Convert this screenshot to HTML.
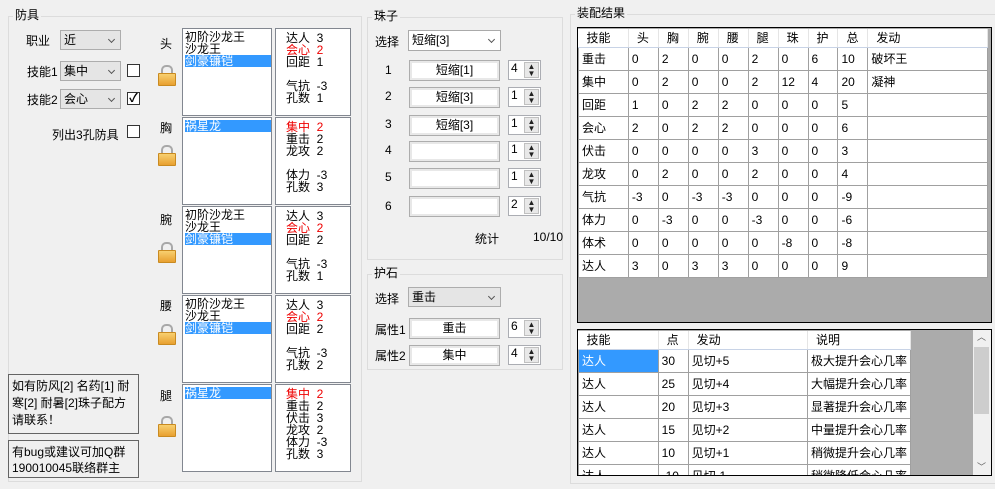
<!DOCTYPE html>
<html><head><meta charset="utf-8"><style>
*{box-sizing:border-box;margin:0;padding:0}
body{width:995px;height:489px;background:#f0f0f0;font-family:"Liberation Sans","Noto Sans CJK SC","WenQuanYi Zen Hei",sans-serif;font-size:12px;color:#000;position:relative;overflow:hidden}
.a{position:absolute}
.grp{position:absolute;border:1px solid #dcdcdc}
.gt{position:absolute;background:#f0f0f0;padding:0 2px;font-size:12px;line-height:14px}
.cb{position:absolute;border:1px solid #adadad;background:#e5e5e5;height:20px;line-height:18px;padding-left:3px}
.cb.w{background:#fff;border-color:#7a7a7a}
.cb:after{content:"";position:absolute;right:6px;top:6px;width:4px;height:4px;border-right:1.5px solid #555;border-bottom:1.5px solid #555;transform:rotate(45deg)}
.chk{position:absolute;width:13px;height:13px;border:1px solid #333;background:#fff}
.lk{position:absolute;width:16px;height:19px}
.lk:before{content:"";position:absolute;left:3px;top:0;width:8px;height:8px;border:2px solid #a8a8a8;border-bottom:none;border-radius:5px 5px 0 0}
.lk:after{content:"";position:absolute;left:0;top:8px;width:16px;height:11px;background:linear-gradient(#f8d070,#e8a030);border:1px solid #c98a20;border-radius:1px}
.lb{position:absolute;background:#fff;border:1px solid #828790;line-height:12px;padding:2px 0 0 2px;overflow:hidden}
.sel{background:#3399ff;color:#fff}
.st{position:absolute;background:#fff;border:1px solid #828790;line-height:12px;padding:3px 0 0 10px;white-space:pre}
.r{color:#e00}
.bt{position:absolute;width:91px;height:21px;border:1px solid #adadad;background:#fff;text-align:center;line-height:18px;box-shadow:inset 0 0 0 2px #e8e8e8}
.sp{position:absolute;width:33px;height:20px;border:1px solid #abadb3;background:#fff;line-height:14px;padding-left:2px}
.sp i{position:absolute;right:1px;top:1px;width:15px;height:16px;background:#e8e8e8;border:1px solid #c0c0c0;font-style:normal;font-size:8px;line-height:7px;text-align:center;color:#222}
.note{position:absolute;border:1px solid #646464;padding:3px 3px;line-height:17px}
table{border-collapse:collapse;position:absolute;background:#fff}
td{border:1px solid #a0a0a0;height:23px;padding:0 0 0 3px;font-size:12px;white-space:nowrap;overflow:hidden}
tr.h td{height:18px;background:#fff;border:none;border-right:1px solid #e5e5e5;border-bottom:1px solid #c8d3e6;padding-left:8px}
</style></head><body>

<div class="grp" style="left:8px;top:16px;width:354px;height:466px"></div>
<div class="gt" style="left:13px;top:8px">防具</div>
<div class="a" style="left:26px;top:32px">职业</div>
<div class="cb" style="left:60px;top:30px;width:61px">近</div>
<div class="a" style="left:27px;top:63px">技能1</div>
<div class="cb" style="left:60px;top:61px;width:61px">集中</div>
<div class="chk" style="left:127px;top:64px"></div>
<div class="a" style="left:27px;top:91px">技能2</div>
<div class="cb" style="left:60px;top:89px;width:61px">会心</div>
<div class="chk" style="left:127px;top:92px;font-size:12px;line-height:11px;text-align:center;font-weight:bold">✓</div>
<div class="a" style="left:52px;top:126px">列出3孔防具</div>
<div class="chk" style="left:127px;top:125px"></div>

<div class="a" style="left:160px;top:35px">头</div>
<div class="a" style="left:160px;top:119px">胸</div>
<div class="a" style="left:160px;top:211px">腕</div>
<div class="a" style="left:160px;top:297px">腰</div>
<div class="a" style="left:160px;top:387px">腿</div>
<div class="lk" style="left:158px;top:65px"></div>
<div class="lk" style="left:158px;top:145px"></div>
<div class="lk" style="left:158px;top:242px"></div>
<div class="lk" style="left:158px;top:324px"></div>
<div class="lk" style="left:158px;top:416px"></div>

<div class="lb" style="left:182px;top:28px;width:90px;height:88px">初阶沙龙王<br>沙龙王<br><div class="sel">剑豪镰铠</div></div>
<div class="st" style="left:275px;top:28px;width:76px;height:88px">达人  3
<span class="r">会心  2</span>
回距  1

气抗  -3
孔数  1</div>
<div class="lb" style="left:182px;top:117px;width:90px;height:88px"><div class="sel">祸星龙</div></div>
<div class="st" style="left:275px;top:117px;width:76px;height:88px"><span class="r">集中  2</span>
重击  2
龙攻  2

体力  -3
孔数  3</div>
<div class="lb" style="left:182px;top:206px;width:90px;height:88px">初阶沙龙王<br>沙龙王<br><div class="sel">剑豪镰铠</div></div>
<div class="st" style="left:275px;top:206px;width:76px;height:88px">达人  3
<span class="r">会心  2</span>
回距  2

气抗  -3
孔数  1</div>
<div class="lb" style="left:182px;top:295px;width:90px;height:88px">初阶沙龙王<br>沙龙王<br><div class="sel">剑豪镰铠</div></div>
<div class="st" style="left:275px;top:295px;width:76px;height:88px">达人  3
<span class="r">会心  2</span>
回距  2

气抗  -3
孔数  2</div>
<div class="lb" style="left:182px;top:384px;width:90px;height:88px"><div class="sel">祸星龙</div></div>
<div class="st" style="left:275px;top:384px;width:76px;height:88px"><span class="r">集中  2</span>
重击  2
伏击  3
龙攻  2
体力  -3
孔数  3</div>

<div class="note" style="left:8px;top:374px;width:131px;height:60px">如有防风[2] 名药[1] 耐寒[2] 耐暑[2]珠子配方请联系！</div>
<div class="note" style="left:8px;top:440px;width:131px;height:38px;line-height:16px">有bug或建议可加Q群190010045联络群主</div>

<div class="grp" style="left:367px;top:17px;width:196px;height:243px"></div>
<div class="gt" style="left:372px;top:9px">珠子</div>
<div class="a" style="left:375px;top:33px">选择</div>
<div class="cb w" style="left:408px;top:30px;width:93px;height:21px;border-color:#aaa">短缩[3]</div>
<div class="a" style="left:385px;top:63px">1</div><div class="bt" style="left:409px;top:60px">短缩[1]</div><div class="sp" style="left:508px;top:60px">4<i>▲<br>▼</i></div>
<div class="a" style="left:385px;top:89px">2</div><div class="bt" style="left:409px;top:87px">短缩[3]</div><div class="sp" style="left:508px;top:87px">1<i>▲<br>▼</i></div>
<div class="a" style="left:385px;top:117px">3</div><div class="bt" style="left:409px;top:115px">短缩[3]</div><div class="sp" style="left:508px;top:115px">1<i>▲<br>▼</i></div>
<div class="a" style="left:385px;top:143px">4</div><div class="bt" style="left:409px;top:141px"></div><div class="sp" style="left:508px;top:141px">1<i>▲<br>▼</i></div>
<div class="a" style="left:385px;top:170px">5</div><div class="bt" style="left:409px;top:168px"></div><div class="sp" style="left:508px;top:168px">1<i>▲<br>▼</i></div>
<div class="a" style="left:385px;top:199px">6</div><div class="bt" style="left:409px;top:196px"></div><div class="sp" style="left:508px;top:196px">2<i>▲<br>▼</i></div>
<div class="a" style="left:475px;top:230px">统计</div>
<div class="a" style="left:533px;top:230px">10/10</div>

<div class="grp" style="left:367px;top:274px;width:196px;height:96px"></div>
<div class="gt" style="left:372px;top:266px">护石</div>
<div class="a" style="left:375px;top:290px">选择</div>
<div class="cb" style="left:408px;top:287px;width:93px">重击</div>
<div class="a" style="left:375px;top:321px">属性1</div><div class="bt" style="left:409px;top:318px">重击</div><div class="sp" style="left:508px;top:318px">6<i>▲<br>▼</i></div>
<div class="a" style="left:375px;top:347px">属性2</div><div class="bt" style="left:409px;top:345px">集中</div><div class="sp" style="left:508px;top:345px">4<i>▲<br>▼</i></div>

<div class="grp" style="left:570px;top:14px;width:430px;height:470px"></div>
<div class="gt" style="left:575px;top:6px">装配结果</div>
<div class="a" style="left:577px;top:27px;width:415px;height:296px;background:#ababab;border:1px solid #000"></div>
<table style="left:578px;top:29px;width:410px">
<colgroup><col width="50"><col width="30"><col width="30"><col width="30"><col width="30"><col width="30"><col width="30"><col width="30"><col width="30"><col width="120"></colgroup>
<tr class="h"><td>技能</td><td>头</td><td>胸</td><td>腕</td><td>腰</td><td>腿</td><td>珠</td><td>护</td><td>总</td><td>发动</td></tr>
<tr><td>重击</td><td>0</td><td>2</td><td>0</td><td>0</td><td>2</td><td>0</td><td>6</td><td>10</td><td>破坏王</td></tr>
<tr><td>集中</td><td>0</td><td>2</td><td>0</td><td>0</td><td>2</td><td>12</td><td>4</td><td>20</td><td>凝神</td></tr>
<tr><td>回距</td><td>1</td><td>0</td><td>2</td><td>2</td><td>0</td><td>0</td><td>0</td><td>5</td><td></td></tr>
<tr><td>会心</td><td>2</td><td>0</td><td>2</td><td>2</td><td>0</td><td>0</td><td>0</td><td>6</td><td></td></tr>
<tr><td>伏击</td><td>0</td><td>0</td><td>0</td><td>0</td><td>3</td><td>0</td><td>0</td><td>3</td><td></td></tr>
<tr><td>龙攻</td><td>0</td><td>2</td><td>0</td><td>0</td><td>2</td><td>0</td><td>0</td><td>4</td><td></td></tr>
<tr><td>气抗</td><td>-3</td><td>0</td><td>-3</td><td>-3</td><td>0</td><td>0</td><td>0</td><td>-9</td><td></td></tr>
<tr><td>体力</td><td>0</td><td>-3</td><td>0</td><td>0</td><td>-3</td><td>0</td><td>0</td><td>-6</td><td></td></tr>
<tr><td>体术</td><td>0</td><td>0</td><td>0</td><td>0</td><td>0</td><td>-8</td><td>0</td><td>-8</td><td></td></tr>
<tr><td>达人</td><td>3</td><td>0</td><td>3</td><td>3</td><td>0</td><td>0</td><td>0</td><td>9</td><td></td></tr>
</table>

<div class="a" style="left:577px;top:329px;width:415px;height:147px;background:#ababab;border:1px solid #000;overflow:hidden">
<table style="left:0;top:1px;width:333px">
<colgroup><col width="80"><col width="30"><col width="120"><col width="103"></colgroup>
<tr class="h"><td>技能</td><td>点</td><td>发动</td><td>说明</td></tr>
<tr><td class="sel">达人</td><td>30</td><td>见切+5</td><td>极大提升会心几率</td></tr>
<tr><td>达人</td><td>25</td><td>见切+4</td><td>大幅提升会心几率</td></tr>
<tr><td>达人</td><td>20</td><td>见切+3</td><td>显著提升会心几率</td></tr>
<tr><td>达人</td><td>15</td><td>见切+2</td><td>中量提升会心几率</td></tr>
<tr><td>达人</td><td>10</td><td>见切+1</td><td>稍微提升会心几率</td></tr>
<tr><td>达人</td><td>-10</td><td>见切-1</td><td>稍微降低会心几率</td></tr>
</table>
<div class="a" style="left:395px;top:0;width:18px;height:145px;background:#f0f0f0">
<div class="a" style="left:1px;top:17px;width:15px;height:67px;background:#cdcdcd"></div>
<div class="a" style="left:4px;top:0px;font-size:9px;color:#606060">︿</div>
<div class="a" style="left:4px;top:130px;font-size:9px;color:#606060">﹀</div>
</div>
</div>
</body></html>
